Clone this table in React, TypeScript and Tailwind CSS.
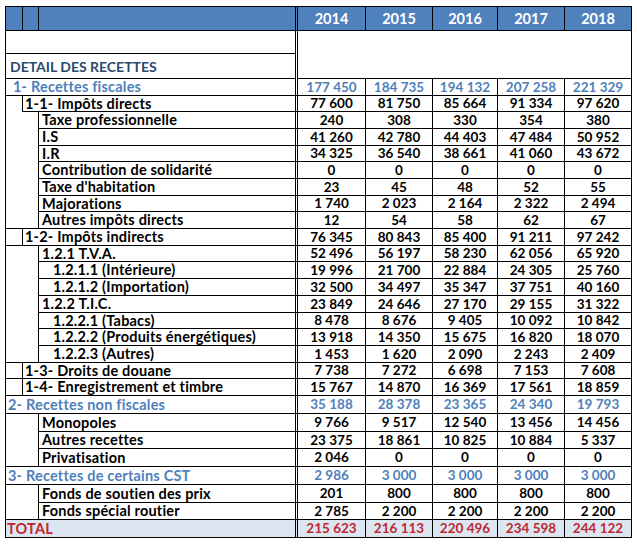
import React from "react";

type Kind = "l1" | "l2" | "l3" | "l4" | "total";

interface Row {
  kind: Kind;
  label: string;
  v: string[];
  h: string;
  pl?: string;
  aLine?: boolean;
}

const YEARS = ["2014", "2015", "2016", "2017", "2018"];
const YW = ["w-[68px]", "w-[67px]", "w-[65px]", "w-[67px]", "w-[67px]"];

const ROWS: Row[] = [
  { kind: "l1", label: "1- Recettes fiscales", pl: "pl-[7px]", h: "h-[17px]", v: ["177 450", "184 735", "194 132", "207 258", "221 329"] },
  { kind: "l2", label: "1-1- Impôts directs", h: "h-[16px]", v: ["77 600", "81 750", "85 664", "91 334", "97 620"] },
  { kind: "l3", label: "Taxe professionnelle", h: "h-[17px]", v: ["240", "308", "330", "354", "380"] },
  { kind: "l3", label: "I.S", h: "h-[17px]", v: ["41 260", "42 780", "44 403", "47 484", "50 952"] },
  { kind: "l3", label: "I.R", h: "h-[16px]", v: ["34 325", "36 540", "38 661", "41 060", "43 672"] },
  { kind: "l3", label: "Contribution de solidarité", h: "h-[17px]", v: ["0", "0", "0", "0", "0"] },
  { kind: "l3", label: "Taxe d'habitation", h: "h-[17px]", v: ["23", "45", "48", "52", "55"] },
  { kind: "l3", label: "Majorations", h: "h-[16px]", v: ["1 740", "2 023", "2 164", "2 322", "2 494"] },
  { kind: "l3", label: "Autres impôts directs", h: "h-[17px]", v: ["12", "54", "58", "62", "67"] },
  { kind: "l2", label: "1-2- Impôts indirects", aLine: true, h: "h-[17px]", v: ["76 345", "80 843", "85 400", "91 211", "97 242"] },
  { kind: "l3", label: "1.2.1 T.V.A.", h: "h-[16px]", v: ["52 496", "56 197", "58 230", "62 056", "65 920"] },
  { kind: "l4", label: "1.2.1.1 (Intérieure)", h: "h-[17px]", v: ["19 996", "21 700", "22 884", "24 305", "25 760"] },
  { kind: "l4", label: "1.2.1.2 (Importation)", h: "h-[17px]", v: ["32 500", "34 497", "35 347", "37 751", "40 160"] },
  { kind: "l3", label: "1.2.2 T.I.C.", h: "h-[17px]", v: ["23 849", "24 646", "27 170", "29 155", "31 322"] },
  { kind: "l4", label: "1.2.2.1 (Tabacs)", h: "h-[16px]", v: ["8 478", "8 676", "9 405", "10 092", "10 842"] },
  { kind: "l4", label: "1.2.2.2 (Produits énergétiques)", h: "h-[17px]", v: ["13 918", "14 350", "15 675", "16 820", "18 070"] },
  { kind: "l4", label: "1.2.2.3 (Autres)", h: "h-[17px]", v: ["1 453", "1 620", "2 090", "2 243", "2 409"] },
  { kind: "l2", label: "1-3- Droits de douane", aLine: true, h: "h-[16px]", v: ["7 738", "7 272", "6 698", "7 153", "7 608"] },
  { kind: "l2", label: "1-4- Enregistrement et timbre", aLine: true, h: "h-[17px]", v: ["15 767", "14 870", "16 369", "17 561", "18 859"] },
  { kind: "l1", label: "2- Recettes non fiscales", pl: "pl-[2px]", h: "h-[18px]", v: ["35 188", "28 378", "23 365", "24 340", "19 793"] },
  { kind: "l3", label: "Monopoles", h: "h-[18px]", v: ["9 766", "9 517", "12 540", "13 456", "14 456"] },
  { kind: "l3", label: "Autres recettes", h: "h-[17px]", v: ["23 375", "18 861", "10 825", "10 884", "5 337"] },
  { kind: "l3", label: "Privatisation", h: "h-[18px]", v: ["2 046", "0", "0", "0", "0"] },
  { kind: "l1", label: "3- Recettes de certains CST", pl: "pl-[2px]", h: "h-[18px]", v: ["2 986", "3 000", "3 000", "3 000", "3 000"] },
  { kind: "l3", label: "Fonds de soutien des prix", h: "h-[18px]", v: ["201", "800", "800", "800", "800"] },
  { kind: "l3", label: "Fonds spécial routier", h: "h-[17px]", v: ["2 785", "2 200", "2 200", "2 200", "2 200"] },
  { kind: "total", label: "TOTAL", pl: "pl-[1px]", h: "h-[18px]", v: ["215 623", "216 113", "220 496", "234 598", "244 122"] },
];

function Values({ v, color }: { v: string[]; color: string }) {
  return (
    <>
      {v.map((x, i) => (
        <div
          key={i}
          className={`${YW[i]} shrink-0 flex items-center justify-center pt-px border-r border-b border-black whitespace-nowrap text-[13.5px] tracking-normal ${color}`}
        >
          {x}
        </div>
      ))}
    </>
  );
}

function TableRow({ row, next }: { row: Row; next?: Row }) {
  const sub = (k?: Kind) => k === "l3" || k === "l4";
  const blankLine = sub(next?.kind) ? "" : "border-b";

  if (row.kind === "l1" || row.kind === "total") {
    const isTotal = row.kind === "total";
    const color = isTotal ? "text-[#c0272d]" : "text-[#4f7fbb]";
    return (
      <div className={`flex ${row.h} ${isTotal ? "bg-[#dce6f1]" : ""}`}>
        <div
          className={`w-[292px] shrink-0 flex items-center pt-px border-b border-r-[3px] border-double border-black whitespace-nowrap ${row.pl} ${color}`}
        >
          {row.label}
        </div>
        <Values v={row.v} color={color} />
      </div>
    );
  }

  if (row.kind === "l2") {
    return (
      <div className={`flex ${row.h}`}>
        <div className={`w-[17px] shrink-0 border-r border-black ${row.aLine ? "border-b" : ""}`} />
        <div className="w-[275px] shrink-0 flex items-center pt-px pl-[2px] border-b border-r-[3px] border-double border-black whitespace-nowrap">
          {row.label}
        </div>
        <Values v={row.v} color="text-black" />
      </div>
    );
  }

  return (
    <div className={`flex ${row.h}`}>
      <div className={`w-[33px] shrink-0 border-r border-black ${blankLine}`} />
      <div
        className={`w-[259px] shrink-0 flex items-center pt-px border-b border-r-[3px] border-double border-black whitespace-nowrap ${
          row.kind === "l4" ? "pl-[14px]" : "pl-[3px]"
        }`}
      >
        {row.label}
      </div>
      <Values v={row.v} color="text-black" />
    </div>
  );
}

export default function App() {
  return (
    <div className="w-[637px] h-[546px] bg-white overflow-hidden pt-[6px] pl-[5px] font-['Lato',sans-serif] text-[14.5px] tracking-[0.2px] font-bold leading-none text-black">
      <div className="w-[627px] border-l border-t border-black">
        {/* header */}
        <div className="flex h-[24px] bg-[#4f81bd] text-white text-[14.5px] tracking-normal">
          <div className="w-[17px] shrink-0 border-r border-b border-black" />
          <div className="w-[16px] shrink-0 border-r border-b border-black" />
          <div className="w-[259px] shrink-0 border-b border-r-[3px] border-double border-black" />
          {YEARS.map((y, i) => (
            <div
              key={y}
              className={`${YW[i]} shrink-0 flex items-center justify-center pt-px border-r border-b border-black`}
            >
              {y}
            </div>
          ))}
        </div>

        {/* blank + title block */}
        <div className="flex">
          <div className="w-[292px] shrink-0 border-r-[3px] border-double border-black">
            <div className="h-[23px] border-b border-black" />
            <div className="h-[25px] flex items-end pb-[4px] pl-[4px] border-b border-black text-[14px] tracking-normal text-[#2a4a6e]">
              DETAIL DES RECETTES
            </div>
          </div>
          <div className="w-[334px] shrink-0 h-[48px] border-r border-b border-black" />
        </div>

        {ROWS.map((r, i) => (
          <TableRow key={r.label} row={r} next={ROWS[i + 1]} />
        ))}
      </div>
    </div>
  );
}
